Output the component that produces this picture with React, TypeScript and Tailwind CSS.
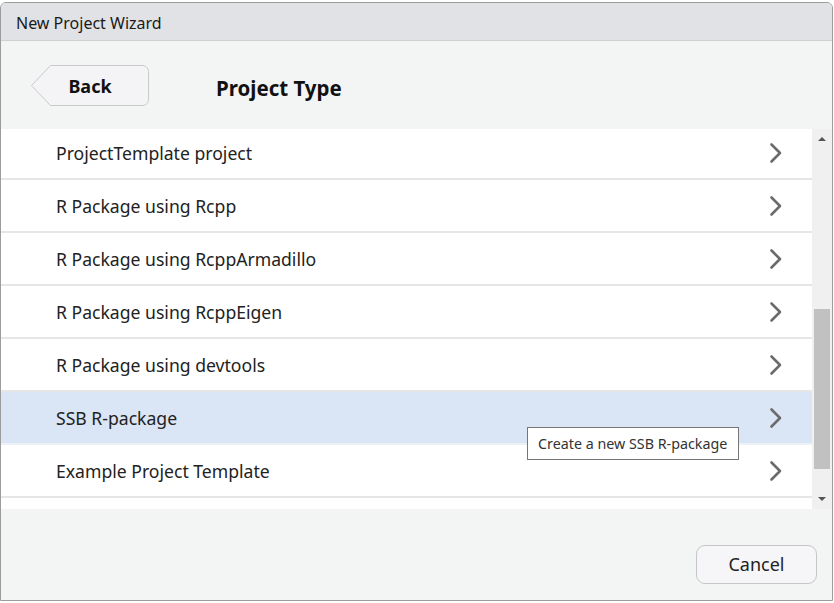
import React from 'react';

const rows = [
  'ProjectTemplate project',
  'R Package using Rcpp',
  'R Package using RcppArmadillo',
  'R Package using RcppEigen',
  'R Package using devtools',
  'SSB R-package',
  'Example Project Template',
];

function Chevron() {
  return (
    <svg width="14" height="22" viewBox="0 0 14 22" className="shrink-0">
      <path d="M2.5 2.5 L11 11 L2.5 19.5" fill="none" stroke="#6b6b6b" strokeWidth="2.6" strokeLinecap="round" strokeLinejoin="round" />
    </svg>
  );
}

function BackButton() {
  return (
    <button type="button" className="relative w-[118px] h-[41px] flex items-center justify-center">
      <svg className="absolute inset-0" width="118" height="41" viewBox="0 0 118 41">
        <path
          d="M19.5 0.5 H111.5 A6 6 0 0 1 117.5 6.5 V34.5 A6 6 0 0 1 111.5 40.5 H19.5 L0.5 20.5 Z"
          fill="#f4f4f6"
          stroke="#c9c9cc"
          strokeWidth="1"
        />
      </svg>
      <span className="relative text-[18px] font-bold text-[#111] mt-[2px]">Back</span>
    </button>
  );
}

export default function App() {
  return (
    <div className="w-[834px] h-[603px] bg-white overflow-hidden font-['Noto_Sans',sans-serif] text-[#222]">
      <div className="mt-[2px] w-[833px] h-[599px] border border-[#9c9c9c] rounded-t-[6px] overflow-hidden flex flex-col bg-[#f3f4f4]">
        <div className="h-[38px] shrink-0 bg-[#e1e2e6] border-b border-[#d0d1d4] flex items-center pl-[15px] pt-[2px] text-[16px] text-[#1a1a1a]">
          New Project Wizard
        </div>
        <div className="h-[88px] shrink-0 flex items-center pl-[30px]">
          <BackButton />
          <h1 className="ml-[67px] text-[20.5px] font-bold text-[#111] mt-[6px]">Project Type</h1>
        </div>
        <div className="relative h-[380px] shrink-0 flex bg-white">
          <div className="flex-1 overflow-hidden">
            <div className="-mt-[2px]">
              {rows.map((r) => {
                const active = r === 'SSB R-package';
                return (
                  <div
                    key={r}
                    className={`h-[53px] flex items-center justify-between pl-[55px] pr-[29px] border-b-2 ${
                      active ? 'bg-[#dae6f5] border-[#edf1f6]' : 'border-[#e6e6e6]'
                    }`}
                  >
                    <span className="text-[17.6px] text-[#222] mt-[2px]">{r}</span>
                    <Chevron />
                  </div>
                );
              })}
            </div>
          </div>
          <div className="w-[20px] shrink-0 bg-[#f0f0f0] flex flex-col items-center">
            <div className="h-[20px] flex items-center justify-center">
              <div className="w-0 h-0 border-x-[4px] border-x-transparent border-b-[4px] border-b-[#555]" />
            </div>
            <div className="flex-1 w-full px-[2px] flex flex-col">
              <div className="h-[160px]" />
              <div className="h-[160px] bg-[#c1c1c1]" />
            </div>
            <div className="h-[20px] flex items-center justify-center">
              <div className="w-0 h-0 border-x-[4px] border-x-transparent border-t-[4px] border-t-[#555]" />
            </div>
          </div>
          <div className="absolute left-[526px] top-[298px] w-[212px] h-[33px] bg-white border border-[#767676] flex items-center pl-[10px] text-[14.3px] text-[#333]">
            Create a new SSB R-package
          </div>
        </div>
        <div className="flex-1 flex items-center justify-end pr-[15px] pt-[20px]">
          <button
            type="button"
            className="w-[121px] h-[39px] rounded-[9px] border border-[#c6c6c8] bg-[#f6f6f8] text-[18px] text-[#222]"
          >
            Cancel
          </button>
        </div>
      </div>
    </div>
  );
}
